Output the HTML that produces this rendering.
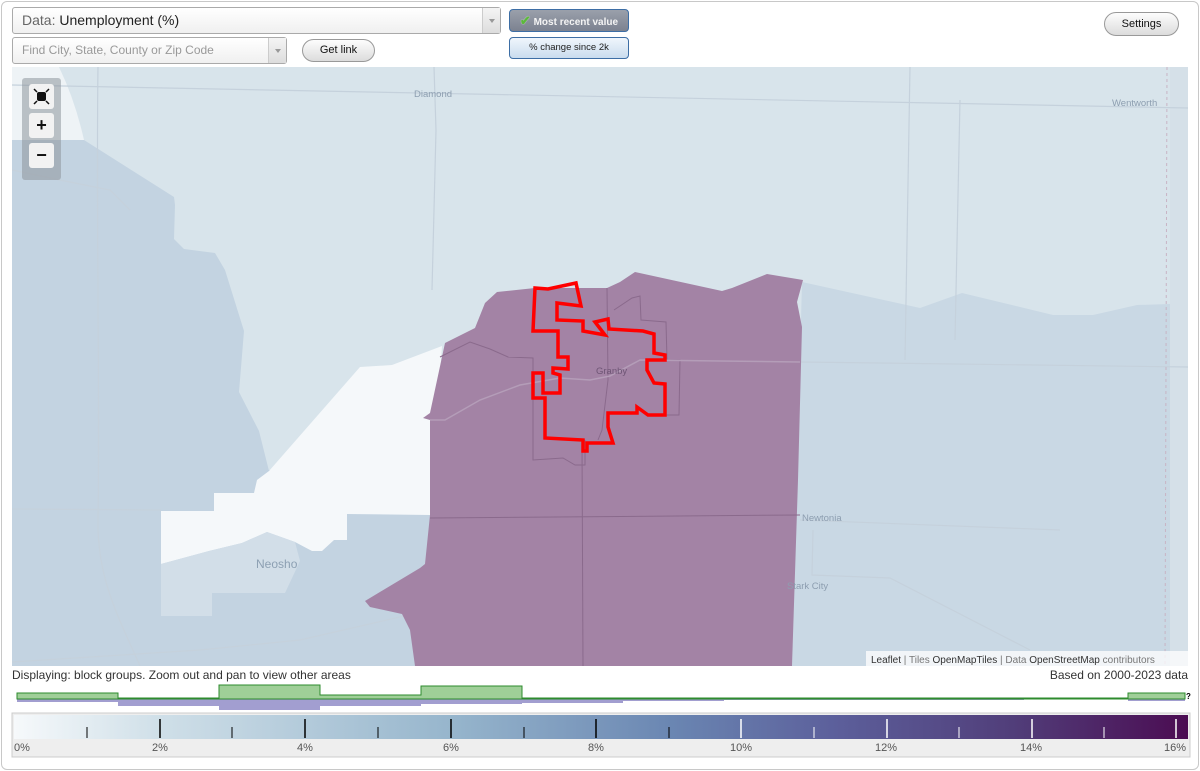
<!DOCTYPE html>
<html><head><meta charset="utf-8"><style>
*{box-sizing:border-box;margin:0;padding:0}
body{width:1200px;height:771px;background:#fff;font-family:"Liberation Sans",sans-serif;position:relative;overflow:hidden}
.frame{position:absolute;left:1px;top:1px;width:1198px;height:769px;border:1px solid #c8c8c8;border-radius:6px;background:#fff}
.dd{position:absolute;border:1px solid #aaa;border-radius:3px;background:linear-gradient(#fff,#f0f0f0);font-size:14px;color:#222}
.dd .arr{position:absolute;right:0;top:0;bottom:0;width:18px;border-left:1px solid #ccc;background:linear-gradient(#f4f4f4,#ddd)}
.dd .arr:after{content:"";position:absolute;left:6px;top:11px;border:3px solid transparent;border-top:4px solid #999}
.btn{position:absolute;border:1px solid #999;border-radius:12px;background:linear-gradient(#fdfdfd,#dcdcdc);font-size:11px;color:#111;text-align:center}
.tg{position:absolute;left:509px;width:120px;border:1px solid #3d6ea5;border-radius:4px;font-size:9px;text-align:center}
.zb{position:absolute;left:29px;width:25px;height:25px;background:#f2f2f2;border-radius:3px;text-align:center;font-weight:bold;font-size:18px;line-height:24px;color:#111}
</style></head><body>
<div class="frame"></div>
<div class="dd" style="left:12px;top:7px;width:489px;height:27px;line-height:25px;padding-left:9px"><span style="color:#666">Data:</span> Unemployment (%)<div class="arr"></div></div>
<div class="dd" style="left:12px;top:37px;width:275px;height:27px;line-height:25px;padding-left:9px;font-size:12px;color:#999">Find City, State, County or Zip Code<div class="arr"></div></div>
<div class="btn" style="left:302px;top:39px;width:73px;height:23px;line-height:21px">Get link</div>
<div class="tg" style="top:9px;height:23px;line-height:21px;background:linear-gradient(#9aa0ab,#7c8290);color:#f4f4f4;font-weight:bold;font-size:10px"><span style="color:#5cb83c;font-size:13px;text-shadow:0 0 1px #fff">✔</span> Most recent value</div>
<div class="tg" style="top:37px;height:22px;line-height:20px;background:linear-gradient(#f0f6fc,#c9dcee);color:#222;font-size:9.5px">% change since 2k</div>
<div class="btn" style="left:1104px;top:12px;width:75px;height:24px;line-height:22px">Settings</div>

<svg style="position:absolute;left:0;top:0" width="1200" height="771">
<defs><clipPath id="c"><rect x="12" y="67" width="1176" height="599"/></clipPath>
<linearGradient id="g" x1="0" x2="1"><stop offset="0" stop-color="#f6f9fb"/><stop offset=".125" stop-color="#cfdfe8"/><stop offset=".375" stop-color="#96b5cc"/><stop offset=".56" stop-color="#6a86b2"/><stop offset=".7" stop-color="#5c5f9b"/><stop offset=".85" stop-color="#513e7a"/><stop offset="1" stop-color="#4b0c52"/></linearGradient></defs>
<g clip-path="url(#c)">
<rect x="12" y="67" width="1176" height="599" fill="#d8e4eb"/>
<path d="M12,67 L59,67 Q75,100 84,140 L12,140 Z" fill="#eef3f6"/>
<polygon points="12,140 84,140 174,197 175,205 174,239 184,249 215,253 225,270 244,331 239,392 259,431 269,471 269,480 257,480 254,493 214,493 214,511 161,511 161,666 12,666" fill="#c3d3e1"/>
<rect x="161" y="470" width="270" height="196" fill="#c3d3e1"/>
<polygon points="269,471 360,367 392,365 442,346 430,515 347,514 347,540 334,540 322,551 312,551 295,542 267,532 242,543 209,551 161,564 161,511 214,511 214,493 254,493 257,480" fill="#f5f8fa"/>
<polygon points="161,564 209,551 242,543 267,532 295,542 300,561 285,593 212,593 212,616 161,616" fill="#d2dee8"/>
<polygon points="802,282 920,308 962,293 1053,315 1093,315 1137,305 1170,304 1170,666 792,666" fill="#c9d8e4"/>
<rect x="1170" y="67" width="18" height="599" fill="#d5e0e8"/>
<g stroke="#c5d1dc" stroke-width="1.2" fill="none">
<path d="M98,67 C96,200 100,400 98,520 C97,580 120,620 140,666"/>
<path d="M434,67 L436,130 L432,290"/>
<path d="M12,85 L1188,108"/>
<path d="M12,509 L161,510"/>
<path d="M12,662 L200,650 L300,640 L430,610"/>
<path d="M910,67 L905,360"/><path d="M960,100 L955,340"/>
<path d="M800,520 L1060,530"/><path d="M813,530 L812,575 L890,578 L1030,650"/>
<path d="M12,170 L60,180 L110,190 L130,210"/>
<path d="M800,362 L1188,367"/>
</g>
<path d="M1167,67 L1165,666" stroke="#c8b4c4" stroke-dasharray="3,3" fill="none"/>
<polygon points="497,292 535,288 607,288 620,282 635,272 722,291 732,288 767,274 803,280 797,302 802,327 798,480 792,666 415,666 410,630 402,614 370,607 365,601 420,568 425,564 430,515 430,420 423,418 430,413 445,343 475,328 485,303" fill="#a383a5"/>
<g stroke="#8a6a8c" stroke-width="1" fill="none">
<path d="M440,357 L470,342 L490,349 L508,357 L533,358 L533,460 L563,458 L575,465 L585,465 L585,440"/>
<path d="M607,288 L608,380 L602,430 L598,440"/>
<path d="M614,310 L632,298 L640,296 L641,320 L666,322 L667,360 L680,360 L679,415 L665,415"/>
<path d="M582,443 L583,666"/><path d="M430,518 L800,515"/>
</g>
<path d="M430,420 L445,420 L480,400 L520,385 L560,378 L590,380 L610,376 L640,360 L720,361 L800,362" stroke="#b49db8" stroke-width="1.5" fill="none"/>
<polygon points="535,288 548,289 576,283 581,306 557,303 557,320 583,321 583,331 605,335 595,322 608,319 609,329 643,331 654,334 654,353 665,355 665,360 647,360 647,370 654,383 665,384 665,415 648,415 637,407 637,413 608,413 608,427 613,443 587,443 587,451 583,451 583,440 545,438 545,398 533,398 533,373 543,373 543,393 560,393 560,375 553,373 553,368 568,369 568,357 558,357 558,331 533,331" fill="none" stroke="#ff0000" stroke-width="3.5"/>
<g font-size="9.5" fill="#8d9eb0">
<text x="414" y="97">Diamond</text><text x="1112" y="106">Wentworth</text>
<text x="802" y="521">Newtonia</text><text x="787" y="589">Stark City</text>
<text x="596" y="374" fill="#6e5575">Granby</text>
<text x="256" y="568" font-size="12" fill="#8da0b3">Neosho</text></g>
<rect x="866" y="651" width="322" height="15" fill="#fff" fill-opacity=".75"/>
<text x="871" y="663" font-size="10" fill="#777"><tspan fill="#333">Leaflet</tspan> | Tiles <tspan fill="#333">OpenMapTiles</tspan> | Data <tspan fill="#333">OpenStreetMap</tspan> contributors</text>
</g>
<rect x="22" y="78" width="39" height="102" rx="3" fill="#8e959c" fill-opacity=".55"/>
<text x="12" y="679" font-size="12" fill="#333">Displaying: block groups. Zoom out and pan to view other areas</text>
<text x="1188" y="679" font-size="12" fill="#333" text-anchor="end">Based on 2000-2023 data</text>
<g fill="#a29ed0">
<rect x="17" y="699" width="101" height="3"/><rect x="118" y="699" width="101" height="7"/><rect x="219" y="699" width="101" height="11"/><rect x="320" y="699" width="101" height="7"/><rect x="421" y="699" width="101" height="5"/><rect x="522" y="699" width="101" height="4"/><rect x="623" y="699" width="101" height="2"/><rect x="724" y="699" width="300" height="1"/><rect x="1128" y="699" width="57" height="2"/></g>
<path d="M17,699 L17,693 L118,693 L118,698 L219,698 L219,685 L320,685 L320,695 L421,695 L421,686 L522,686 L522,698 L1128,698 L1128,693 L1185,693 L1185,699 Z" fill="#9fcf98" stroke="#2e8b2e" stroke-width="1"/>
<text x="1186" y="699" font-size="8" font-weight="bold">?</text>
<rect x="12" y="713" width="1178" height="44" fill="#eee" stroke="#ccc"/>
<rect x="14" y="715" width="1174" height="24" fill="url(#g)"/>
<g stroke-width="1.5">
<path d="M87,727V738M232,727V738M378,727V738M524,727V738M669,727V738" stroke="#000" stroke-width="1"/>
<path d="M160,719V738M305,719V738M451,719V738M596,719V738" stroke="#000"/>
<path d="M741,719V738M887,719V738M1032,719V738M1176,719V738" stroke="#fff"/>
<path d="M814,727V738M959,727V738M1104,727V738" stroke="#fff" stroke-width="1"/>
</g>
<g font-size="11" fill="#555" text-anchor="middle">
<text x="22" y="751">0%</text><text x="160" y="751">2%</text><text x="305" y="751">4%</text><text x="451" y="751">6%</text><text x="596" y="751">8%</text><text x="741" y="751">10%</text><text x="886" y="751">12%</text><text x="1031" y="751">14%</text><text x="1175" y="751">16%</text></g>
</svg>
<div class="zb" style="top:84px"><svg width="25" height="25"><rect x="8" y="8" width="9" height="9" rx="2" fill="#111"/><path d="M5,5l3,3M20,5l-3,3M5,20l3,-3M20,20l-3,-3" stroke="#111" stroke-width="1.5"/></svg></div>
<div class="zb" style="top:113px">+</div>
<div class="zb" style="top:143px">−</div>
</body></html>
